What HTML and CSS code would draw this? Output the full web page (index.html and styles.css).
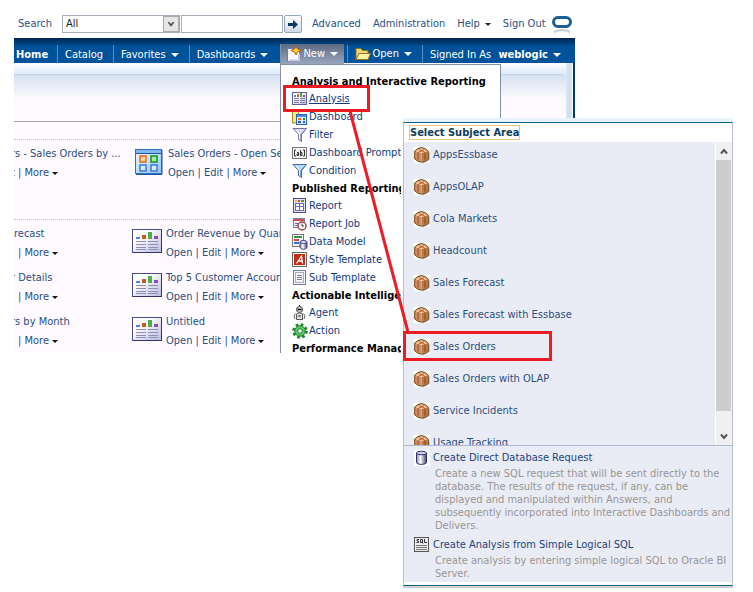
FILE: index.html
```html
<!DOCTYPE html>
<html lang="en">
<head>
<meta charset="utf-8">
<title>Home</title>
<link rel="stylesheet" href="styles.css">
</head>
<body>
<svg class="defs" aria-hidden="true">
  <defs>
    <linearGradient id="g-lav" x1="0" y1="0" x2="1" y2="1"><stop offset="0.3" stop-color="#fff"/><stop offset="1" stop-color="#b9b9dc"/></linearGradient>
    <linearGradient id="g-blue" x1="0" y1="0" x2="1" y2="1"><stop offset="0" stop-color="#f2f9ff"/><stop offset="1" stop-color="#8fc4f2"/></linearGradient>
    <linearGradient id="g-db" x1="0" y1="0" x2="1" y2="0"><stop offset="0" stop-color="#8585b8"/><stop offset="0.4" stop-color="#fff"/><stop offset="1" stop-color="#3d3d78"/></linearGradient>
    <symbol id="i-report" viewBox="0 0 30 24">
      <rect x=".5" y=".5" width="29" height="23" fill="url(#g-lav)" stroke="#4b4b8c"/>
      <path d="M29.5 1v22.500H1" fill="none" stroke="#33336b"/>
      <path fill="#4285ff" d="M4 8h4v2H4z"/><path fill="#c85a20" d="M10 6h4v4h-4z"/><path fill="#4bb04b" d="M16 3h4v7h-4z"/><path fill="#8450c0" d="M22 7h4v3h-4z"/>
      <path d="M4 12.500h10M16 12.500h10M4 15.500h10M16 15.500h10M4 18.500h10M16 18.500h10M4 20.500h10M16 20.500h10" stroke="#8e8eb8"/>
    </symbol>
    <symbol id="i-dashbig" viewBox="0 0 28 26">
      <rect x=".5" y=".5" width="26" height="24" fill="url(#g-blue)" stroke="#2e6fc4"/>
      <path d="M1 1h25v3H1z" fill="#7db8f5"/><path d="M1 4.500h25M27 1v24.500H1" stroke="#2257a6" fill="none"/>
      <g stroke-width="1.500"><rect x="5" y="7" width="6" height="6" fill="#ffd2b0" stroke="#f06818"/><rect x="16" y="7" width="6" height="6" fill="#a8eaa0" stroke="#10941c"/><rect x="5" y="16" width="6" height="6" fill="#dcebff" stroke="#3a78e0"/><rect x="16" y="16" width="6" height="6" fill="#dcebff" stroke="#3a78e0"/></g>
    </symbol>
    <symbol id="i-analysis" viewBox="0 0 16 16">
      <rect x=".5" y="1.500" width="14" height="12" fill="url(#g-lav)" stroke="#5f5f9c"/>
      <path fill="#4285ff" d="M2 4h2v2H2z"/><path fill="#d65a20" d="M5 3h2v3H5z"/><path fill="#3cab3c" d="M8 2h2v4H8z"/><path fill="#8450c0" d="M11 4h2v2h-2z"/>
      <path d="M2 7.500h5M8 7.500h5M2 9.500h5M8 9.500h5M2 11.500h5M8 11.500h5" stroke="#8080a8"/>
    </symbol>
    <symbol id="i-dash" viewBox="0 0 16 16">
      <path d="M.5 14V1.500h5l1 2V14z" fill="#f7e68a" stroke="#a58b21"/>
      <rect x="4.500" y="5.500" width="10" height="10" fill="#e0efff" stroke="#2b62bd"/>
      <path d="M5 6h9v2H5z" fill="#4b8de8"/><path fill="#f06818" d="M6 9h3v2H6z"/><path fill="#10941c" d="M11 9h2v2h-2z"/><path fill="#2858c8" d="M6 12h3v2H6zM11 12h2v2h-2z"/>
    </symbol>
    <symbol id="i-filter" viewBox="0 0 16 16">
      <path d="M1 1.500h13.500L9.500 7.500v7l-3-2v-5z" fill="#dcdcf2" stroke="#7474a8"/>
      <path d="M4 3l3.500 4v5" stroke="#fff" fill="none"/><path d="M13 3L9 7.500v6" stroke="#7777ad" fill="none"/>
    </symbol>
    <symbol id="i-cond" viewBox="0 0 16 16">
      <path d="M1 1.500h13.500L9.500 7.500v7l-3-2v-5z" fill="#b7dcff" stroke="#4169a4"/>
      <path d="M4 3l3.500 4v5" stroke="#fff" fill="none"/><path d="M13 3L9 7.500v6" stroke="#357cc5" fill="none"/>
    </symbol>
    <symbol id="i-ab" viewBox="0 0 16 16">
      <rect x=".5" y="2.500" width="14" height="11" fill="#f4f4f4" stroke="#777"/>
      <path d="M4 5H2.500v6H4M11 5h1.500v6H11" stroke="#333" fill="none"/>
      <path d="M5 7.500h1.500v3H5V9h1.500M8.500 5v5.500H10v-3H8.500" stroke="#333" fill="none"/>
    </symbol>
    <symbol id="i-rep" viewBox="0 0 16 16">
      <rect x="1.500" y=".5" width="12" height="14" fill="#e6e6f7" stroke="#4b4b88"/>
      <path fill="#e0b828" d="M3 2h2v2H3z"/><path fill="#d04040" d="M6 2h2v2H6z"/><path fill="#4a9a40" d="M9 2h3v2H9z"/>
      <path fill="#fff" d="M3 5h9v8H3z"/><path d="M3 5.500h9M3 8.500h9M3 12.500h9M3.500 5v8M7.500 5v8M11.500 5v8" stroke="#6a6aa8"/>
    </symbol>
    <symbol id="i-job" viewBox="0 0 16 16">
      <rect x="1.500" y="2.500" width="11" height="9" fill="#eeeefa" stroke="#8080a8"/><path fill="#c85050" d="M2 3h10v2H2z"/>
      <path d="M3 7.500h5M3 9.500h4" stroke="#4477cc"/><circle cx="10" cy="10" r="4" fill="#fff" stroke="#a94545" stroke-width="1.500"/><path d="M10 7.500V10h2" stroke="#333" fill="none"/>
    </symbol>
    <symbol id="i-model" viewBox="0 0 16 16">
      <rect x=".5" y=".5" width="11" height="12" fill="#f6f6fc" stroke="#777"/><path fill="#2f9b3a" d="M2 2h8v2H2z"/><path fill="#d04848" d="M2 5h5v2H2z"/><path fill="#3a70d0" d="M2 8h5v2H2z"/>
      <path d="M8 8v5c0 3 7 3 7 0V8z" fill="url(#g-db)" stroke="#44447c"/><ellipse cx="11.500" cy="8" rx="3.500" ry="1.500" fill="#d8d8f0" stroke="#44447c"/>
    </symbol>
    <symbol id="i-style" viewBox="0 0 16 16">
      <rect x=".5" y=".5" width="14" height="14" fill="#f8f8f8" stroke="#666"/><path fill="#c92a12" d="M2 2h11v11H2z"/>
      <path d="M4.500 11.500L9.500 4l1 7.500M6.500 9H10" stroke="#fff" fill="none" stroke-width="1.300"/>
    </symbol>
    <symbol id="i-sub" viewBox="0 0 16 16">
      <rect x="1.500" y=".5" width="12" height="14" fill="#f5f5fc" stroke="#7777a8"/><rect x="3.500" y="2.500" width="8" height="10" fill="none" stroke="#666" stroke-dasharray="1 1"/>
      <path d="M5 5.500h5M5 7.500h5M5 9.500h5" stroke="#7d7dab"/>
    </symbol>
    <symbol id="i-agent" viewBox="0 0 16 16">
      <path d="M7.500 0v2" stroke="#333"/><circle cx="7.500" cy="4.500" r="3" fill="#d5d5d5" stroke="#444"/><path d="M5.500 4.500h4" stroke="#111" stroke-width="1.500"/>
      <path d="M4.500 14.500V9q3-2.500 6 0v5.500z" fill="#e2e2e2" stroke="#555"/><path d="M3.500 8.500L2 11l1 3M11.500 8.500L13 11l-1 3" stroke="#666" fill="none"/><circle cx="7.500" cy="11" r="1.300" fill="#777"/>
    </symbol>
    <symbol id="i-action" viewBox="0 0 16 16">
      <circle cx="8" cy="8" r="6.300" fill="none" stroke="#1b8329" stroke-width="3" stroke-dasharray="2.500 2.450"/>
      <circle cx="8" cy="8" r="5.300" fill="#5cc566" stroke="#1b8329"/><circle cx="8" cy="8" r="2.300" fill="#fff" stroke="#1b8329"/>
    </symbol>
    <symbol id="i-box" viewBox="0 0 16 16">
      <path fill="#fff" d="M0 0h16v16H0z"/>
      <path d="M15.500 5v8l-6 3-2-1" fill="#999"/>
      <path d="M.7 4L4 1.500 7.500.6l3.500.9L14.300 4v8L11 14.300l-3.500.9-3.500-.9L.7 12z" fill="#c9935f" stroke="#744a14"/>
      <path d="M7.500 6.500L14 4.500V12l-3 2-3.500.9z" fill="#b67c48"/>
      <path d="M1.500 4.300l3-2 3-.9 3 .9 3 2-6 2z" fill="#f3cf9c"/>
      <path d="M7.500 6.500V14" stroke="#e0b27c" stroke-width=".8"/>
      <path d="M4 6.200v6.300M11 6.200v6.300" stroke="#a83020" stroke-width=".9"/>
      <path d="M4 5.500l6-3M11 5.500L5 2.500" stroke="#c03020" stroke-width=".8"/>
    </symbol>
    <symbol id="i-db" viewBox="0 0 16 16">
      <path fill="#fff" d="M0 0h16v16H0z"/>
      <path d="M2.500 3v9.500c0 2.500 10 2.500 10 0V3z" fill="url(#g-db)" stroke="#303068"/><ellipse cx="7.500" cy="3" rx="5" ry="1.800" fill="#cfcfeb" stroke="#303068"/>
    </symbol>
    <symbol id="i-sql" viewBox="0 0 16 16">
      <rect x=".5" y=".5" width="14" height="14" fill="#eee" stroke="#555"/>
      <path d="M5 2.500H3v1.500h1.500v1.500H2.500M6.500 2.500h2v3h-2zM8 5l1 1.500M10.500 2v3.500h2.500" stroke="#333" fill="none"/>
      <path d="M2 8.500h11M2 10.500h11M2 12.500h11" stroke="#777"/>
    </symbol>
    <symbol id="i-new" viewBox="0 0 16 16">
      <path d="M1.500 2.500h8l4 4v9h-12z" fill="#fafaff" stroke="#7676a8"/><path d="M3 14.500h10V8" fill="none" stroke="#c5c5e5" stroke-width="2"/>
      <path d="M10 0l1.500 3 3.500 1.500-3.500 1.500L10 9 8.500 6 5 4.500 8.500 3z" fill="#ffd728" stroke="#b55a18"/>
    </symbol>
    <symbol id="i-folder" viewBox="0 0 16 16">
      <path d="M1 13.500v-11h5l1.500 2H13v9z" fill="#f0d77c" stroke="#91731c"/><path d="M1 13.500l3-6h11.500l-2.500 6z" fill="#ffefa0" stroke="#91731c"/>
    </symbol>
  </defs>
</svg>

<div class="app">
  <header class="top">
    <label for="scope">Search</label>
    <div class="scope"><select id="scope"><option>All</option></select><svg viewBox="0 0 16 16"><path d="M5 6l3 3.500L11 6" fill="none" stroke="#555" stroke-width="2"/></svg></div>
    <input class="term" type="text" aria-label="Search text">
    <button class="go" aria-label="Go"><svg viewBox="0 0 16 16"><path d="M3 7h5V4l5 4.500L8 13v-3H3z" fill="#12395b"/></svg></button>
    <nav class="links"><a href="#">Advanced</a><a href="#">Administration</a><a href="#">Help<i class="caret"></i></a><a href="#">Sign Out</a></nav>
    <svg class="logo" viewBox="0 0 20 18"><rect x="1.500" y="2.500" width="17" height="9" rx="4.500" fill="none" stroke="#1c5f9d" stroke-width="3"/><path d="M2 17q8-4 16 0" fill="none" stroke="#bdd0e2" stroke-width="2"/></svg>
  </header>

  <nav class="bar">
    <a href="#" class="home">Home</a>
    <a href="#">Catalog</a>
    <a href="#">Favorites<i class="caret"></i></a>
    <a href="#" class="dashboards">Dashboards<i class="caret"></i></a>
    <a href="#" class="new"><svg><use href="#i-new"/></svg>New<i class="caret"></i></a>
    <a href="#" class="open"><svg><use href="#i-folder"/></svg>Open<i class="caret"></i></a>
    <span class="user">Signed In As <a href="#">weblogic<i class="caret"></i></a></span>
  </nav>

  <div class="frame">
    <main class="content">
      <section class="band">
        <div class="row">
          <div class="left"><p>rs - Sales Orders by ...</p><p>t | <a href="#">More</a><i class="caret"></i></p></div>
          <div class="right dash"><svg><use href="#i-dashbig"/></svg><div><p>Sales Orders - Open Service</p><p><a href="#">Open</a> | <a href="#">Edit</a> | <a href="#">More</a><i class="caret"></i></p></div></div>
        </div>
      </section>
      <section class="band recent">
        <div class="row">
          <div class="left"><p class="whole">recast</p><p class="cut">| <a href="#">More</a><i class="caret"></i></p></div>
          <div class="right"><svg><use href="#i-report"/></svg><div><p>Order Revenue by Quarter</p><p><a href="#">Open</a> | <a href="#">Edit</a> | <a href="#">More</a><i class="caret"></i></p></div></div>
        </div>
        <div class="row">
          <div class="left"><p>r Details</p><p class="cut">| <a href="#">More</a><i class="caret"></i></p></div>
          <div class="right"><svg><use href="#i-report"/></svg><div><p>Top 5 Customer Accounts</p><p><a href="#">Open</a> | <a href="#">Edit</a> | <a href="#">More</a><i class="caret"></i></p></div></div>
        </div>
        <div class="row">
          <div class="left"><p>rs by Month</p><p class="cut">| <a href="#">More</a><i class="caret"></i></p></div>
          <div class="right"><svg><use href="#i-report"/></svg><div><p>Untitled</p><p><a href="#">Open</a> | <a href="#">Edit</a> | <a href="#">More</a><i class="caret"></i></p></div></div>
        </div>
      </section>
    </main>
  </div>

  <div class="menu">
    <h2>Analysis and Interactive Reporting</h2>
    <a href="#" class="active"><svg><use href="#i-analysis"/></svg><span>Analysis</span></a>
    <a href="#"><svg><use href="#i-dash"/></svg>Dashboard</a>
    <a href="#"><svg><use href="#i-filter"/></svg>Filter</a>
    <a href="#"><svg><use href="#i-ab"/></svg>Dashboard Prompt</a>
    <a href="#"><svg><use href="#i-cond"/></svg>Condition</a>
    <h2>Published Reporting</h2>
    <a href="#"><svg><use href="#i-rep"/></svg>Report</a>
    <a href="#"><svg><use href="#i-job"/></svg>Report Job</a>
    <a href="#"><svg><use href="#i-model"/></svg>Data Model</a>
    <a href="#"><svg><use href="#i-style"/></svg>Style Template</a>
    <a href="#"><svg><use href="#i-sub"/></svg>Sub Template</a>
    <h2>Actionable Intelligence</h2>
    <a href="#"><svg><use href="#i-agent"/></svg>Agent</a>
    <a href="#"><svg><use href="#i-action"/></svg>Action</a>
    <h2>Performance Management</h2>
  </div>
</div>

<div class="dialog">
  <div class="panel">
    <h1><span>Select Subject Area</span></h1>
    <div class="scroller">
      <div class="areas">
        <a href="#"><svg><use href="#i-box"/></svg>AppsEssbase</a>
        <a href="#"><svg><use href="#i-box"/></svg>AppsOLAP</a>
        <a href="#"><svg><use href="#i-box"/></svg>Cola Markets</a>
        <a href="#"><svg><use href="#i-box"/></svg>Headcount</a>
        <a href="#"><svg><use href="#i-box"/></svg>Sales Forecast</a>
        <a href="#"><svg><use href="#i-box"/></svg>Sales Forecast with Essbase</a>
        <a href="#"><svg><use href="#i-box"/></svg>Sales Orders</a>
        <a href="#"><svg><use href="#i-box"/></svg>Sales Orders with OLAP</a>
        <a href="#"><svg><use href="#i-box"/></svg>Service Incidents</a>
        <a href="#"><svg><use href="#i-box"/></svg>Usage Tracking</a>
      </div>
      <div class="scrollbar">
        <svg viewBox="0 0 16 16"><path d="M5 10l3-3.500L11 10" fill="none" stroke="#555" stroke-width="2"/></svg>
        <div class="thumb"></div>
        <svg viewBox="0 0 16 16"><path d="M5 6l3 3.500L11 6" fill="none" stroke="#555" stroke-width="2"/></svg>
      </div>
    </div>
    <div class="extra">
      <a href="#"><svg><use href="#i-db"/></svg>Create Direct Database Request</a>
      <p>Create a new SQL request that will be sent directly to the<br>database. The results of the request, if any, can be<br>displayed and manipulated within Answers, and<br>subsequently incorporated into Interactive Dashboards and<br>Delivers.</p>
      <a href="#"><svg><use href="#i-sql"/></svg>Create Analysis from Simple Logical SQL</a>
      <p>Create analysis by entering simple logical SQL to Oracle BI<br>Server.</p>
    </div>
  </div>
</div>

<svg class="callout" viewBox="0 0 280 280" aria-hidden="true">
  <g fill="none" stroke="#ed1c24" stroke-width="3"><path d="M4.500 5.500h84v24h-84zM124.500 251.500h146v27h-146z"/><path d="M70 30L128 251"/></g>
</svg>
</body>
</html>
```
FILE: styles.css
```css
* { box-sizing: border-box; }

body {
  margin: 0;
  position: relative;
  min-height: 100vh;
  background: #fff;
  color: #2c4f80;
  font: 11px/14px "DejaVu Sans Condensed", Tahoma, "DejaVu Sans", sans-serif;
}

a { color: inherit; text-decoration: none; }
p, h1, h2 { margin: 0; }
.defs { position: absolute; width: 0; height: 0; }

.caret {
  display: inline-block;
  margin-left: 3px;
  border: 3px solid transparent;
  border-top-color: currentColor;
  border-bottom: 0;
  vertical-align: 1px;
}

.app {
  position: relative;
  margin: 0 178px 0 14px;
}

/* search row */
.top {
  display: flex;
  align-items: center;
  height: 38px;
  padding: 10px 3px 0 4px;
  white-space: nowrap;
}
.top label { width: 44px; }
.scope { position: relative; width: 118px; height: 18px; }
.scope select {
  appearance: none;
  width: 100%;
  height: 18px;
  padding: 0 3px;
  border: 1px solid #a5acb5;
  border-radius: 0;
  background: #fff;
  color: #222;
  font: inherit;
}
.scope svg {
  position: absolute;
  right: 1px;
  top: 1px;
  width: 16px;
  height: 16px;
  border: 1px solid #aaa;
  background: #e6e6e6;
  pointer-events: none;
}
.term {
  width: 102px;
  height: 18px;
  margin-left: 1px;
  padding: 0 3px;
  border: 1px solid #a5acb5;
  font: inherit;
}
.go {
  width: 18px;
  height: 18px;
  margin-left: 1px;
  padding: 0;
  border: 1px solid #93a3b5;
  border-radius: 2px;
  background: linear-gradient(#fff, #cfdbe8);
}
.go svg { display: block; width: 16px; height: 16px; }
.links { display: flex; flex: 1; gap: 12px; margin-left: 10px; }
.links .caret { margin-left: 5px; color: #222; }
.logo { width: 20px; height: 18px; }

/* navigation bar */
.bar {
  display: flex;
  align-items: center;
  height: 25px;
  padding-top: 6px;
  background: linear-gradient(#002449, #00529b 9px);
  color: #fff;
  white-space: nowrap;
}
.bar > * { height: 18px; line-height: 20px; padding: 0 10px 0 7px; border-left: 1px solid #5b8dbd; }
.bar .home { width: 43px; padding: 0 2px; border: 0; font-weight: bold; }
.bar .dashboards { margin-right: 2px; }
.bar .new, .bar .open { display: flex; align-items: center; }
.bar .new { width: 64px; height: 20px; padding: 0 5px; border-color: #8590a5; background: linear-gradient(#5e6a82, #99a5bd); }
.bar .open { margin-left: 3px; }
.bar svg { width: 16px; height: 16px; flex: none; margin-right: 1px; }
.bar .user { flex: 1; padding-right: 0; }
.user a { margin-left: 4px; font-weight: bold; }
.bar .caret { margin-left: 5px; border-width: 4px 4px 0; }

/* page surface */
.frame {
  padding: 11px 9px 0 0;
  background:
    linear-gradient(#fff, #dcebf9 11px, transparent 11px) 0 0 / calc(100% - 9px) 100% no-repeat,
    linear-gradient(to left, #003b70 2px, #fff 2px, #cfe0f4 4px, #cfe0f4 7px, #dcebf9 9px);
}
.content {
  padding-top: 46px;
  border-top: 1px solid #c3d0e2;
  border-radius: 0 6px 0 0;
  background: linear-gradient(#d6e1f0, #fefaff 25px);
}
.band { border-top: 1px solid #a5a2a8; padding-top: 17px; height: 98px; }
.band .row { border-top: 1px dotted #c2bec6; padding-top: 7px; }
.row { display: flex; height: 44px; line-height: 14px; white-space: nowrap; overflow: hidden; }
.band:not(.recent) .row { height: 80px; }
.band.recent { height: auto; padding-top: 7px; border-top: 1px dotted #c2bec6; }
.recent .row { border: 0; padding: 0; }
.row p { margin-bottom: 5px; }
.row .caret { color: #111; }
.left { width: 118px; overflow: hidden; }
.left p { margin-left: -3px; }
.left .whole { margin-left: 0; }
.left .cut { margin-left: 4px; }
.right { display: flex; gap: 4px; }
.right svg { width: 30px; height: 24px; margin-top: 2px; }
.right.dash { padding-left: 3px; gap: 5px; }
.right.dash svg { width: 28px; height: 26px; }
.recent .row:last-child { height: 38px; }

/* drop-down menu */
.menu {
  position: absolute;
  left: 266px;
  top: 64px;
  bottom: 0;
  width: 221px;
  padding: 8px 11px 0;
  overflow: hidden;
  border: 1px solid #8590a5;
  border-bottom: 0;
  background: #fff;
  color: #0e3a80;
  white-space: nowrap;
}
.menu h2 { height: 17px; color: #000; font-size: 11px; line-height: 17px; }
.menu > a { display: flex; align-items: center; gap: 1px; height: 18px; }
.menu svg { width: 16px; height: 16px; }
.menu .active span { text-decoration: underline; }

/* subject area dialog */
.dialog {
  position: absolute;
  left: 403px;
  right: 20px;
  top: 118px;
  padding-top: 4px;
  background: #eaf3fb;
  box-shadow: -2px 0 #fff;
}
.panel {
  border: 1px solid #b8bfd4;
  border-top-color: #00638c;
  border-bottom-color: #00638c;
  padding-bottom: 3px;
  background: #fff;
  box-shadow: 0 2px #cdd0d6;
}
.panel h1 { height: 19px; padding: 3px 6px 0; color: #0d3d5f; font-size: 11px; line-height: 13px; }
.panel h1 span { display: inline-block; outline: 1px solid #efc677; }
.scroller { display: flex; height: 304px; background: #e9ecf5; border-bottom: 1px solid #b0b9da; }
.areas { flex: 1; padding-top: 5px; overflow: hidden; }
.areas a { display: flex; gap: 3px; height: 32px; padding-left: 10px; line-height: 16px; }
.areas svg, .extra svg { flex: none; width: 16px; height: 16px; }
.scrollbar { display: flex; flex-direction: column; width: 17px; margin-top: 1px; padding-right: 1px; border-left: 1px solid #fff; background: #f0f0f0; }
.scrollbar svg { width: 16px; height: 17px; }
.thumb { flex: 1; margin-bottom: 17px; background: #cdcdcd; }
.extra { padding: 4px 6px 2px 10px; background: #e9ecf5; }
.extra a { display: flex; gap: 3px; height: 17px; color: #1d4380; line-height: 16px; }
.extra p { margin-bottom: 5px; padding-left: 21px; color: #9a9594; line-height: 13px; white-space: nowrap; }
.extra p:last-child { margin-bottom: 0; }

/* highlight linking the menu item to the chosen subject area */
.callout { position: absolute; left: 280px; top: 81px; width: 280px; height: 280px; pointer-events: none; }
```
